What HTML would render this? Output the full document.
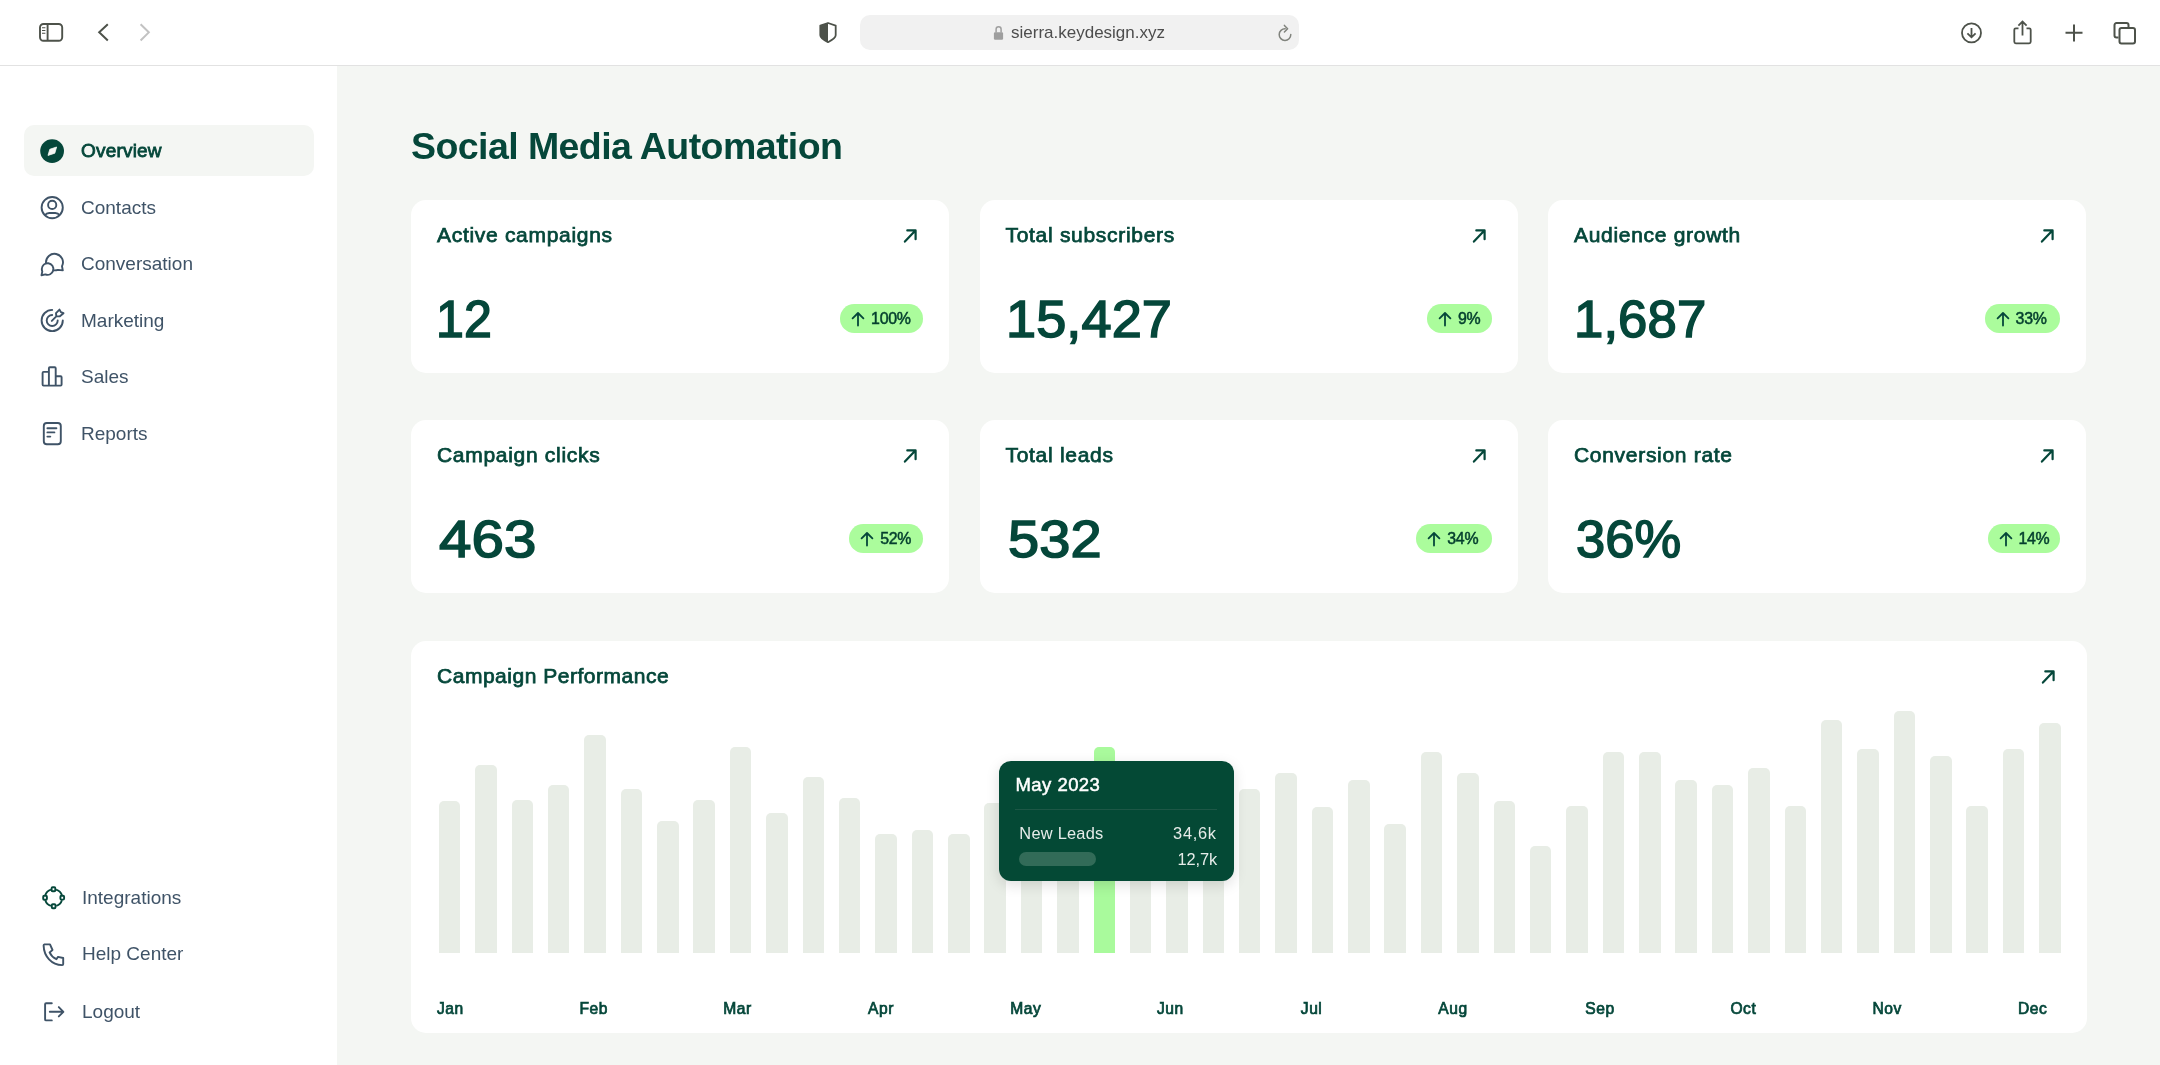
<!DOCTYPE html>
<html><head><meta charset="utf-8">
<style>
*{margin:0;padding:0;box-sizing:border-box}
html,body{width:2160px;height:1065px;overflow:hidden;background:#fff;font-family:"Liberation Sans",sans-serif;}
body{will-change:transform;-webkit-font-smoothing:antialiased}
.abs{position:absolute}
#toolbar{position:absolute;left:0;top:0;width:2160px;height:66px;background:#fff;border-bottom:1.5px solid #e2e2e2}
#url{position:absolute;left:860px;top:15px;width:439px;height:34.5px;background:#f1f1f1;border-radius:10px}
#urltext{position:absolute;left:1011px;top:23px;font-size:17px;line-height:20px;color:#4d4d4d;white-space:nowrap}
#side{position:absolute;left:0;top:66px;width:337.4px;height:999px;background:#fff}
#main{position:absolute;left:337.4px;top:66px;width:1822.6px;height:999px;background:#f4f6f3}
.nav{position:absolute;left:81px;font-size:19px;line-height:19px;color:#3f5367;white-space:nowrap}
.nav.act{font-weight:normal;-webkit-text-stroke-width:0.8px;color:#05473a;letter-spacing:0.2px}
.ico{position:absolute}
#actbg{position:absolute;left:24px;top:124.8px;width:289.5px;height:51.3px;background:#f4f6f3;border-radius:10px}
h1{position:absolute;left:411px;top:128px;letter-spacing:-0.57px;font-size:37.5px;line-height:37.5px;font-weight:bold;color:#05473a;white-space:nowrap}
.card{position:absolute;width:538px;height:172.5px;background:#fff;border-radius:15px}
.ch{position:absolute;left:26px;top:23.9px;font-size:21px;line-height:21px;letter-spacing:0.7px;-webkit-text-stroke-width:0.75px;color:#05473a;white-space:nowrap}
.ext{position:absolute;left:485px;top:20px}
.num{position:absolute;left:26px;font-size:52px;line-height:52px;-webkit-text-stroke-width:1.55px;color:#05473a;white-space:nowrap;top:93px;letter-spacing:0.1px;transform-origin:0 0}
.pill{position:absolute;right:25.8px;top:104.4px;height:28.5px;border-radius:14.25px;background:#abfc9c;color:#043f2e;font-size:15.9px;line-height:15.9px;-webkit-text-stroke-width:0.5px}
.pill svg{position:absolute;left:11px;top:6.5px}
.pill span{position:absolute;left:31px;top:6.9px;letter-spacing:-0.3px;white-space:nowrap}
#chart{position:absolute;left:411px;top:641px;width:1675.5px;height:392px;background:#fff;border-radius:15px}
#chart .ch{top:23.9px;letter-spacing:0.52px}
.bar{position:absolute;width:21.5px;background:#e8ede6;border-radius:5px 5px 0 0}
.bar.hi{background:#a9fa9c}
.mon{position:absolute;top:359.7px;letter-spacing:0.55px;font-size:15.6px;line-height:15.6px;-webkit-text-stroke-width:0.72px;color:#05473a;white-space:nowrap}
#tip{position:absolute;left:999px;top:761px;width:234.7px;height:119.5px;background:#044935;border-radius:12px;box-shadow:0 4px 14px rgba(0,0,0,0.13)}
#tip .t1{position:absolute;left:16.5px;top:15px;font-size:18.5px;line-height:18.5px;-webkit-text-stroke-width:0.5px;letter-spacing:0.45px;color:#fff;white-space:nowrap}
#tip .sep{position:absolute;left:16.3px;top:47.5px;width:202px;height:1.6px;background:#1d5746}
#tip .t2{position:absolute;left:20.3px;top:64px;letter-spacing:0.25px;font-size:16.4px;line-height:16.4px;color:#e6ece9;white-space:nowrap}
#tip .v1{position:absolute;right:17px;letter-spacing:0.7px;top:64px;font-size:16.4px;line-height:16.4px;color:#e6ece9;white-space:nowrap}
#tip .v2{position:absolute;right:16.5px;letter-spacing:-0.1px;top:90px;font-size:16.4px;line-height:16.4px;color:#e6ece9;white-space:nowrap}
#tip .pb{position:absolute;left:20px;top:91px;width:77px;height:14px;border-radius:7px;background:#326b58}
</style></head><body>
<div id="toolbar">
  <svg class="ico" style="left:37px;top:21px" width="28" height="23" viewBox="0 0 28 23"><rect x="3" y="3" width="22.2" height="16.8" rx="3.5" fill="none" stroke="#4d524a" stroke-width="1.9"/><path d="M10.6 3V19.8" stroke="#4d524a" stroke-width="1.9"/><path d="M5 6.8H8.4M5 9.5H8.4M5 12.2H8.4" stroke="#4d524a" stroke-width="1.1"/></svg>
  <svg class="ico" style="left:95px;top:21px" width="16" height="23" viewBox="0 0 16 23"><path d="M12.8 3.2L4.2 11.35L12.8 19.5" fill="none" stroke="#4d524a" stroke-width="2"/></svg>
  <svg class="ico" style="left:137px;top:21px" width="16" height="23" viewBox="0 0 16 23"><path d="M3.6 3.2L11.8 11.35L3.6 19.5" fill="none" stroke="#c2c2c2" stroke-width="2"/></svg>
  <svg class="ico" style="left:810px;top:15px" width="35" height="35" viewBox="0 0 35 35"><path d="M18 8L25.7 10.6V20.2C25.7 22.3 22.5 24.8 18 27.2C13.5 24.8 10.3 22.3 10.3 20.2V10.6Z" fill="none" stroke="#4d524a" stroke-width="1.8" stroke-linejoin="round"/><path d="M18 8L10.3 10.6V20.2C10.3 22.3 13.5 24.8 18 27.2Z" fill="#4d524a"/></svg>
  <div id="url"></div>
  <svg class="ico" style="left:985px;top:18px" width="25" height="28" viewBox="0 0 25 28"><path d="M11.1 14.5V11.2A2.5 2.5 0 0 1 16.1 11.2V14.5" fill="none" stroke="#9f9f9f" stroke-width="1.5"/><rect x="8.9" y="14.2" width="9.2" height="7.6" rx="1.2" fill="#9f9f9f"/></svg>
  <div id="urltext">sierra.keydesign.xyz</div>
  <svg class="ico" style="left:1270px;top:18px" width="30" height="30" viewBox="0 0 30 30"><path d="M15.2 10.8A5.8 5.8 0 1 0 20.8 16.6" fill="none" stroke="#80837d" stroke-width="1.5" stroke-linecap="round"/><path d="M14.4 7.4L17.6 10.7L14.4 14" fill="none" stroke="#80837d" stroke-width="1.5" stroke-linecap="round" stroke-linejoin="round"/></svg>
  <svg class="ico" style="left:1958px;top:20px" width="27" height="26" viewBox="0 0 27 26"><circle cx="13.5" cy="12.9" r="9.5" fill="none" stroke="#4d524a" stroke-width="1.8"/><path d="M13.5 8V17.3M9.4 13.3L13.5 17.3L17.6 13.3" fill="none" stroke="#4d524a" stroke-width="1.8"/></svg>
  <svg class="ico" style="left:2011px;top:18px" width="23" height="28" viewBox="0 0 23 28"><path d="M7.5 10.3H4.8A1.5 1.5 0 0 0 3.3 11.8V23.8A1.5 1.5 0 0 0 4.8 25.3H18.2A1.5 1.5 0 0 0 19.7 23.8V11.8A1.5 1.5 0 0 0 18.2 10.3H15.5" fill="none" stroke="#4d524a" stroke-width="1.8"/><path d="M11.5 17.5V4M7.4 7.7L11.5 3.6L15.6 7.7" fill="none" stroke="#4d524a" stroke-width="1.8"/></svg>
  <svg class="ico" style="left:2063px;top:22px" width="22" height="22" viewBox="0 0 22 22"><path d="M11 2.5V19.5M2.5 10.8H19.5" fill="none" stroke="#4d524a" stroke-width="2"/></svg>
  <svg class="ico" style="left:2111px;top:20px" width="28" height="26" viewBox="0 0 28 26"><path d="M7.5 17.5H5.5A2 2 0 0 1 3.5 15.5V5A2 2 0 0 1 5.5 3H15.5A2 2 0 0 1 17.5 5V7" fill="none" stroke="#4d524a" stroke-width="2"/><rect x="8.5" y="8" width="15.5" height="15.5" rx="2" fill="none" stroke="#4d524a" stroke-width="2"/></svg>
</div>
<div id="side"></div>
<div id="main"></div>
<div id="actbg"></div>
<!-- nav icons -->
<svg class="ico" style="left:36px;top:135px" width="32" height="32" viewBox="0 0 32 32"><circle cx="16.1" cy="16.1" r="11.9" fill="#05473a"/><path d="M20.6 12L13.8 14.3L12 20.4L18.8 18.2Z" fill="#f5f7f4" stroke="#f5f7f4" stroke-width="0.8" stroke-linejoin="round"/></svg>
<div class="nav act" style="top:141px">Overview</div>
<svg class="ico" style="left:36px;top:191px" width="32" height="32" viewBox="0 0 32 32"><circle cx="16.2" cy="16.6" r="10.6" fill="none" stroke="#3f5367" stroke-width="1.9"/><circle cx="16.2" cy="13.9" r="4.1" fill="none" stroke="#3f5367" stroke-width="1.9"/><path d="M8.8 24.2C10 22.6 11.5 22 13.2 22H19.3C21 22 22.5 22.6 23.7 24.2" fill="none" stroke="#3f5367" stroke-width="1.9"/></svg>
<div class="nav" style="top:197.5px">Contacts</div>
<svg class="ico" style="left:36px;top:248px" width="32" height="32" viewBox="0 0 32 32"><path d="M10 15A8.5 8.5 0 1 1 26 18.3L26.8 22.4L22 21.9C20.5 22.3 19 22.5 17.4 22.3" fill="none" stroke="#3f5367" stroke-width="1.9" stroke-linejoin="round" stroke-linecap="round"/><path d="M5.8 21A5.8 5.8 0 1 1 9.4 26.4L5.5 27.2L6.3 23.6C6 22.8 5.8 21.9 5.8 21Z" fill="none" stroke="#3f5367" stroke-width="1.9" stroke-linejoin="round"/></svg>
<div class="nav" style="top:254px">Conversation</div>
<svg class="ico" style="left:36px;top:304px" width="32" height="32" viewBox="0 0 32 32"><path d="M16.2 5.9A10.6 10.6 0 1 0 26.8 16.5" fill="none" stroke="#3f5367" stroke-width="1.9" stroke-linecap="round"/><path d="M16.2 11A5.5 5.5 0 1 0 21.7 16.5" fill="none" stroke="#3f5367" stroke-width="1.9" stroke-linecap="round"/><path d="M15.8 16.9L20.3 12.4M23.5 5.6L20 9.2L20.3 12.4L23.9 12.3L27.5 9.2L24.9 8.1Z" fill="none" stroke="#3f5367" stroke-width="1.9" stroke-linejoin="round" stroke-linecap="round"/></svg>
<div class="nav" style="top:310.5px">Marketing</div>
<svg class="ico" style="left:36px;top:361px" width="32" height="32" viewBox="0 0 32 32"><path d="M12.9 24.6H7.6A1 1 0 0 1 6.6 23.6V11.9A1 1 0 0 1 7.6 10.9H12.9M12.9 24.6V7.3A1 1 0 0 1 13.9 6.3H18.7A1 1 0 0 1 19.7 7.3V24.6ZM19.7 15.2H24.6A1 1 0 0 1 25.6 16.2V23.6A1 1 0 0 1 24.6 24.6H19.7" fill="none" stroke="#3f5367" stroke-width="1.9" stroke-linejoin="round"/></svg>
<div class="nav" style="top:367px">Sales</div>
<svg class="ico" style="left:36px;top:417px" width="32" height="32" viewBox="0 0 32 32"><rect x="7.8" y="6" width="17" height="21.2" rx="3" fill="none" stroke="#3f5367" stroke-width="1.9"/><path d="M11.4 11.3H20.4M11.4 15.4H18.4M11.4 19.6H14.3" stroke="#3f5367" stroke-width="1.9" stroke-linecap="round"/></svg>
<div class="nav" style="top:423.5px">Reports</div>
<svg class="ico" style="left:37px;top:881px" width="32" height="32" viewBox="0 0 32 32"><path d="M13.9 8.6A8.6 8.6 0 0 0 8.3 14.1M19.1 8.6A8.6 8.6 0 0 1 24.9 14.1M8.3 19.2A8.6 8.6 0 0 0 13.9 24.9M24.9 19.2A8.6 8.6 0 0 1 19.3 24.9" fill="none" stroke="#05473a" stroke-width="1.9"/><rect x="14.6" y="6.3" width="3.7" height="3.9" rx="1" fill="none" stroke="#05473a" stroke-width="1.9"/><rect x="14.8" y="23.3" width="3.7" height="3.9" rx="1" fill="none" stroke="#05473a" stroke-width="1.9"/><rect x="6.2" y="14.8" width="3.7" height="3.9" rx="1" fill="none" stroke="#05473a" stroke-width="1.9"/><rect x="23.4" y="14.7" width="3.7" height="3.9" rx="1" fill="none" stroke="#05473a" stroke-width="1.9"/></svg>
<div class="nav" style="top:888px;left:82px">Integrations</div>
<svg class="ico" style="left:37px;top:938px" width="32" height="32" viewBox="0 0 32 32"><path d="M7.4 6.4H13L15.5 12L12.6 14.4C13.9 17.4 16.3 19.8 19.4 21.2L21 18.9L26.2 20V26.1A1 1 0 0 1 25.2 27.1C14.6 26.9 6.9 18.5 6.6 7.4A1 1 0 0 1 7.4 6.4Z" fill="none" stroke="#3f5367" stroke-width="1.9" stroke-linejoin="round"/></svg>
<div class="nav" style="top:944px;left:82px">Help Center</div>
<svg class="ico" style="left:37px;top:996px" width="32" height="32" viewBox="0 0 32 32"><path d="M14.8 7.3H9.1A1 1 0 0 0 8.1 8.3V23.4A1 1 0 0 0 9.1 24.4H14.8" fill="none" stroke="#3f5367" stroke-width="1.9" stroke-linecap="round"/><path d="M12.8 15.8H26.2M21.8 11.1L26.4 15.8L21.8 20.4" fill="none" stroke="#3f5367" stroke-width="1.9" stroke-linecap="round" stroke-linejoin="round"/></svg>
<div class="nav" style="top:1002px;left:82px">Logout</div>

<h1>Social Media Automation</h1>
<div class="card" style="left:411px;top:200px">
<div class="ch">Active campaigns</div><svg class="ext" width="28" height="28" viewBox="0 0 28 28"><path d="M8.9 21.6L19.4 10.6M11.3 10.4H19.6V19.2" fill="none" stroke="#05473a" stroke-width="2.2" stroke-linecap="round" stroke-linejoin="round"/></svg>
<div class="num" style="left:25px;transform:scaleX(0.9642)">12</div>
<div class="pill" style="width:83.1px"><svg width="14" height="16" viewBox="0 0 14 16"><path d="M7 14.6V1.8M1.6 7.4L7 2L12.4 7.4" fill="none" stroke="#05473a" stroke-width="1.8" stroke-linecap="round" stroke-linejoin="round"/></svg><span>100%</span></div>
</div>
<div class="card" style="left:979.5px;top:200px">
<div class="ch">Total subscribers</div><svg class="ext" width="28" height="28" viewBox="0 0 28 28"><path d="M8.9 21.6L19.4 10.6M11.3 10.4H19.6V19.2" fill="none" stroke="#05473a" stroke-width="2.2" stroke-linecap="round" stroke-linejoin="round"/></svg>
<div class="num" style="left:26px;transform:scaleX(1.0397)">15,427</div>
<div class="pill" style="width:64.8px"><svg width="14" height="16" viewBox="0 0 14 16"><path d="M7 14.6V1.8M1.6 7.4L7 2L12.4 7.4" fill="none" stroke="#05473a" stroke-width="1.8" stroke-linecap="round" stroke-linejoin="round"/></svg><span>9%</span></div>
</div>
<div class="card" style="left:1548px;top:200px">
<div class="ch">Audience growth</div><svg class="ext" width="28" height="28" viewBox="0 0 28 28"><path d="M8.9 21.6L19.4 10.6M11.3 10.4H19.6V19.2" fill="none" stroke="#05473a" stroke-width="2.2" stroke-linecap="round" stroke-linejoin="round"/></svg>
<div class="num" style="left:26px;transform:scaleX(1.0127)">1,687</div>
<div class="pill" style="width:75.6px"><svg width="14" height="16" viewBox="0 0 14 16"><path d="M7 14.6V1.8M1.6 7.4L7 2L12.4 7.4" fill="none" stroke="#05473a" stroke-width="1.8" stroke-linecap="round" stroke-linejoin="round"/></svg><span>33%</span></div>
</div>
<div class="card" style="left:411px;top:420px">
<div class="ch">Campaign clicks</div><svg class="ext" width="28" height="28" viewBox="0 0 28 28"><path d="M8.9 21.6L19.4 10.6M11.3 10.4H19.6V19.2" fill="none" stroke="#05473a" stroke-width="2.2" stroke-linecap="round" stroke-linejoin="round"/></svg>
<div class="num" style="left:28px;transform:scaleX(1.1198)">463</div>
<div class="pill" style="width:74px"><svg width="14" height="16" viewBox="0 0 14 16"><path d="M7 14.6V1.8M1.6 7.4L7 2L12.4 7.4" fill="none" stroke="#05473a" stroke-width="1.8" stroke-linecap="round" stroke-linejoin="round"/></svg><span>52%</span></div>
</div>
<div class="card" style="left:979.5px;top:420px">
<div class="ch">Total leads</div><svg class="ext" width="28" height="28" viewBox="0 0 28 28"><path d="M8.9 21.6L19.4 10.6M11.3 10.4H19.6V19.2" fill="none" stroke="#05473a" stroke-width="2.2" stroke-linecap="round" stroke-linejoin="round"/></svg>
<div class="num" style="left:28px;transform:scaleX(1.0765)">532</div>
<div class="pill" style="width:75.4px"><svg width="14" height="16" viewBox="0 0 14 16"><path d="M7 14.6V1.8M1.6 7.4L7 2L12.4 7.4" fill="none" stroke="#05473a" stroke-width="1.8" stroke-linecap="round" stroke-linejoin="round"/></svg><span>34%</span></div>
</div>
<div class="card" style="left:1548px;top:420px">
<div class="ch">Conversion rate</div><svg class="ext" width="28" height="28" viewBox="0 0 28 28"><path d="M8.9 21.6L19.4 10.6M11.3 10.4H19.6V19.2" fill="none" stroke="#05473a" stroke-width="2.2" stroke-linecap="round" stroke-linejoin="round"/></svg>
<div class="num" style="left:28px;transform:scaleX(1.0097)">36%</div>
<div class="pill" style="width:72.7px"><svg width="14" height="16" viewBox="0 0 14 16"><path d="M7 14.6V1.8M1.6 7.4L7 2L12.4 7.4" fill="none" stroke="#05473a" stroke-width="1.8" stroke-linecap="round" stroke-linejoin="round"/></svg><span>14%</span></div>
</div>
<div id="chart">
<div class="ch">Campaign Performance</div>
<svg class="ext" style="left:1623px" width="28" height="28" viewBox="0 0 28 28"><path d="M8.9 21.6L19.4 10.6M11.3 10.4H19.6V19.2" fill="none" stroke="#05473a" stroke-width="2.2" stroke-linecap="round" stroke-linejoin="round"/></svg>
<div class="bar" style="left:27.8px;top:160.0px;height:151.7px"></div>
<div class="bar" style="left:64.2px;top:124.0px;height:187.7px"></div>
<div class="bar" style="left:100.5px;top:159.0px;height:152.7px"></div>
<div class="bar" style="left:136.9px;top:144.0px;height:167.7px"></div>
<div class="bar" style="left:173.3px;top:94.0px;height:217.7px"></div>
<div class="bar" style="left:209.6px;top:148.0px;height:163.7px"></div>
<div class="bar" style="left:246.0px;top:180.0px;height:131.7px"></div>
<div class="bar" style="left:282.4px;top:159.0px;height:152.7px"></div>
<div class="bar" style="left:318.8px;top:106.0px;height:205.7px"></div>
<div class="bar" style="left:355.1px;top:172.0px;height:139.7px"></div>
<div class="bar" style="left:391.5px;top:136.0px;height:175.7px"></div>
<div class="bar" style="left:427.9px;top:157.0px;height:154.7px"></div>
<div class="bar" style="left:464.2px;top:193.0px;height:118.7px"></div>
<div class="bar" style="left:500.6px;top:189.0px;height:122.7px"></div>
<div class="bar" style="left:537.0px;top:193.0px;height:118.7px"></div>
<div class="bar" style="left:573.3px;top:162.0px;height:149.7px"></div>
<div class="bar" style="left:609.7px;top:149.0px;height:162.7px"></div>
<div class="bar" style="left:646.1px;top:149.0px;height:162.7px"></div>
<div class="bar hi" style="left:682.5px;top:106.0px;height:205.7px"></div>
<div class="bar" style="left:718.8px;top:149.0px;height:162.7px"></div>
<div class="bar" style="left:755.2px;top:149.0px;height:162.7px"></div>
<div class="bar" style="left:791.6px;top:149.0px;height:162.7px"></div>
<div class="bar" style="left:827.9px;top:148.0px;height:163.7px"></div>
<div class="bar" style="left:864.3px;top:132.0px;height:179.7px"></div>
<div class="bar" style="left:900.7px;top:166.0px;height:145.7px"></div>
<div class="bar" style="left:937.0px;top:139.0px;height:172.7px"></div>
<div class="bar" style="left:973.4px;top:183.0px;height:128.7px"></div>
<div class="bar" style="left:1009.8px;top:111.0px;height:200.7px"></div>
<div class="bar" style="left:1046.2px;top:132.0px;height:179.7px"></div>
<div class="bar" style="left:1082.5px;top:160.0px;height:151.7px"></div>
<div class="bar" style="left:1118.9px;top:205.0px;height:106.7px"></div>
<div class="bar" style="left:1155.3px;top:165.0px;height:146.7px"></div>
<div class="bar" style="left:1191.6px;top:111.0px;height:200.7px"></div>
<div class="bar" style="left:1228.0px;top:111.0px;height:200.7px"></div>
<div class="bar" style="left:1264.4px;top:139.0px;height:172.7px"></div>
<div class="bar" style="left:1300.7px;top:144.0px;height:167.7px"></div>
<div class="bar" style="left:1337.1px;top:127.0px;height:184.7px"></div>
<div class="bar" style="left:1373.5px;top:165.0px;height:146.7px"></div>
<div class="bar" style="left:1409.9px;top:79.0px;height:232.7px"></div>
<div class="bar" style="left:1446.2px;top:108.0px;height:203.7px"></div>
<div class="bar" style="left:1482.6px;top:70.0px;height:241.7px"></div>
<div class="bar" style="left:1519.0px;top:115.0px;height:196.7px"></div>
<div class="bar" style="left:1555.3px;top:165.0px;height:146.7px"></div>
<div class="bar" style="left:1591.7px;top:108.0px;height:203.7px"></div>
<div class="bar" style="left:1628.1px;top:82.0px;height:229.7px"></div>
<div class="mon" style="left:26.0px">Jan</div>
<div class="mon" style="left:168.5px">Feb</div>
<div class="mon" style="left:312.3px">Mar</div>
<div class="mon" style="left:457.1px">Apr</div>
<div class="mon" style="left:599.2px">May</div>
<div class="mon" style="left:745.9px">Jun</div>
<div class="mon" style="left:889.8px">Jul</div>
<div class="mon" style="left:1027.3px">Aug</div>
<div class="mon" style="left:1174.3px">Sep</div>
<div class="mon" style="left:1319.4px">Oct</div>
<div class="mon" style="left:1461.5px">Nov</div>
<div class="mon" style="left:1606.9px">Dec</div>
</div>
<div id="tip">
<div class="t1">May 2023</div>
<div class="sep"></div>
<div class="t2">New Leads</div>
<div class="v1">34,6k</div>
<div class="pb"></div>
<div class="v2">12,7k</div>
</div>
</body></html>
